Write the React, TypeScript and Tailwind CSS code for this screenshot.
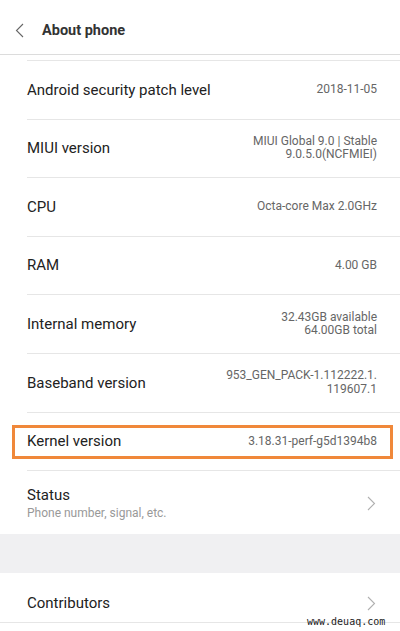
import React from "react";

interface InfoRowProps {
  label: string;
  value: string[];
  highlight?: boolean;
}

const Chevron = ({ className }: { className?: string }) => (
  <svg width="9" height="15" viewBox="0 0 9 15" className={className} fill="none">
    <path d="M1 1l6.5 6.5L1 14" stroke="currentColor" strokeWidth="1.1" />
  </svg>
);

const InfoRow: React.FC<InfoRowProps> = ({ label, value, highlight }) => (
  <div className="relative flex h-[58.6px] items-center justify-between border-b border-[#e6e6e6] ml-[27px] pr-[23px]">
    <span className="text-[15px] text-[#222]">{label}</span>
    <div className="flex flex-col items-end text-[12px] leading-[13.5px] text-[#666]">
      {value.map((v) => (
        <span key={v}>{v}</span>
      ))}
    </div>
    {highlight && (
      // orange highlight frame drawn over the row
      <div className="absolute top-[12px] bottom-[11px] left-[-15px] right-[7px] border-[3px] border-[#f0883a]" />
    )}
  </div>
);

export default function App() {
  const rows: InfoRowProps[] = [
    { label: "Android security patch level", value: ["2018-11-05"] },
    { label: "MIUI version", value: ["MIUI Global 9.0 | Stable", "9.0.5.0(NCFMIEI)"] },
    { label: "CPU", value: ["Octa-core Max 2.0GHz"] },
    { label: "RAM", value: ["4.00 GB"] },
    { label: "Internal memory", value: ["32.43GB available", "64.00GB total"] },
    { label: "Baseband version", value: ["953_GEN_PACK-1.112222.1.", "119607.1"] },
    { label: "Kernel version", value: ["3.18.31-perf-g5d1394b8"], highlight: true },
  ];

  return (
    <div className="relative h-[631px] w-[400px] overflow-hidden bg-white" style={{ fontFamily: "Roboto, 'Noto Sans', sans-serif" }}>
      <header className="flex h-[55px] items-center border-b border-[#dcdcdc] pt-[8px]">
        <Chevron className="ml-[15px] mt-[-1px] h-[15px] w-[9px] rotate-180 text-[#666]" />
        <h1 className="ml-[18px] text-[14.5px] font-bold text-[#333]">About phone</h1>
      </header>

      <div className="mt-[5px] ml-[27px] border-t border-[#e6e6e6]" />

      {rows.map((r) => (
        <InfoRow key={r.label} {...r} />
      ))}

      <div className="flex h-[63px] items-center justify-between pl-[27px] pr-[24px]">
        <div className="flex flex-col">
          <span className="text-[15px] leading-[20px] text-[#222]">Status</span>
          <span className="text-[12px] leading-[16px] text-[#999]">Phone number, signal, etc.</span>
        </div>
        <Chevron className="mt-[2px] text-[#b0b0b0]" />
      </div>

      <div className="h-[39px] bg-[#f0f0f2]" />

      <div className="flex h-[50px] items-center justify-between pl-[27px] pr-[24px] pt-[11px] border-b border-[#e6e6e6]">
        <span className="text-[15px] text-[#222]">Contributors</span>
        <Chevron className="text-[#b0b0b0]" />
      </div>

      <span className="absolute left-[307px] top-[614px] text-[10px] text-[#222]" style={{ fontFamily: "'DejaVu Sans Mono', monospace" }}>
        www.deuaq.com
      </span>
    </div>
  );
}
